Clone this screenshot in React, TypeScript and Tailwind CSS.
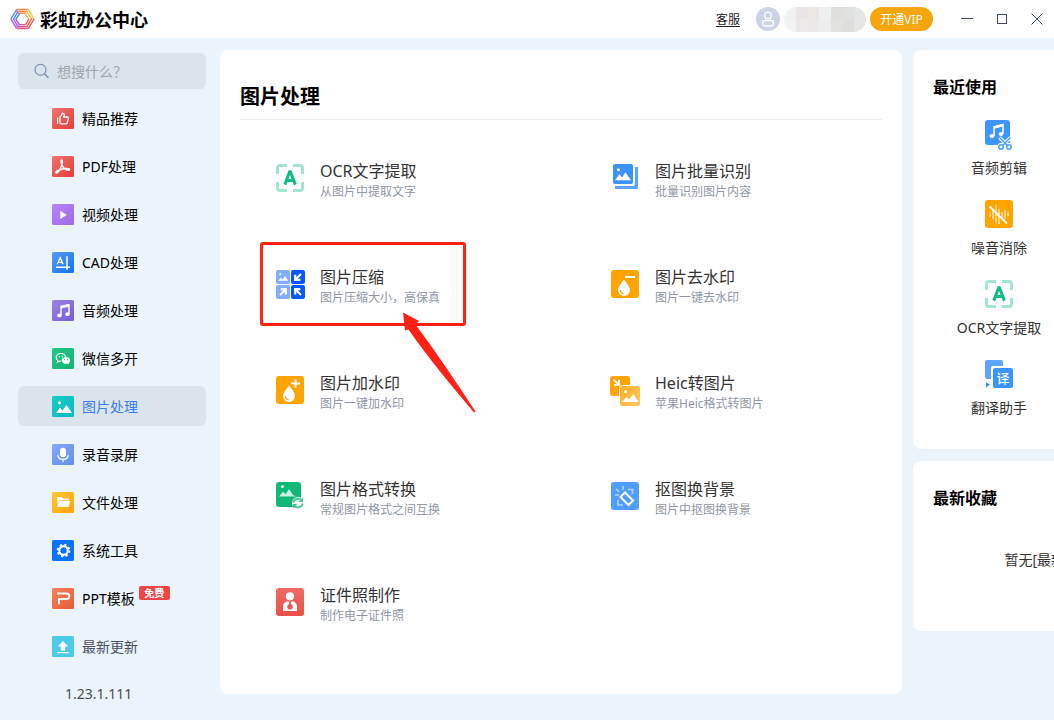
import type { ReactNode } from "react";

/* ---------- sidebar icons: 22 x 21 tiles ---------- */

function Tile({ id, from, to, children }: { id: string; from: string; to: string; children: ReactNode }) {
  return (
    <svg width="22" height="21" viewBox="0 0 22 21" fill="none" className="shrink-0" aria-hidden="true">
      <defs>
        <linearGradient id={id} x1="0" y1="0" x2="1" y2="1">
          <stop offset="0" stopColor={from} />
          <stop offset="1" stopColor={to} />
        </linearGradient>
      </defs>
      <rect width="22" height="21" rx="1.5" fill={`url(#${id})`} />
      {children}
    </svg>
  );
}

const ThumbIcon = () => (
  <Tile id="t-thumb" from="#ee7472" to="#e63b38">
    <path d="M5.6 9.6v6.2M8 9.4l2.6-4.2c1.4 0 1.9 1 1.6 2.1l-.4 1.7h3.4c.9 0 1.3.7 1.1 1.5l-1 4.1c-.2.8-.7 1.2-1.5 1.2H9.2c-.8 0-1.2-.4-1.2-1.2z" stroke="#fff" strokeWidth="1.3" strokeLinejoin="round" />
  </Tile>
);
const PdfIcon = () => (
  <Tile id="t-pdf" from="#ee7472" to="#e63b38">
    <path d="M4.3 17.2c1.8-.7 4.1-4.3 5.3-7.7.7-2.1 1.2-5 .3-5.4-1.1-.4-1.2 1.9-.4 3.9 1.2 3.2 3.8 5.9 6.7 6.3 1.6.2 1.8-1.2.3-1.5-3.2-.6-7.6.4-10.5 1.7-1.9.9-3 2.2-1.7 2.7z" stroke="#fff" strokeWidth="1.4" strokeLinejoin="round" />
  </Tile>
);
const VideoIcon = () => (
  <Tile id="t-video" from="#b884fb" to="#9a6be8">
    <path d="M8.3 6.7v8.4L14.8 11z" fill="#fff" />
  </Tile>
);
const CadIcon = () => (
  <Tile id="t-cad" from="#5b9bf6" to="#1172ee">
    <path d="M5.3 12.3 8.2 5.6l2.9 6.7M6.3 10.3h3.9" stroke="#fff" strokeWidth="1.3" />
    <path d="M4 15.2h14M15 4.2v13.6" stroke="#fff" strokeWidth="1.5" />
  </Tile>
);
const MusicIcon = () => (
  <Tile id="t-music" from="#9b84e4" to="#775bdb">
    <path d="M9 15.2V6.2l8-1.7v9.5" stroke="#fff" strokeWidth="1.4" />
    <path d="M9 6l8-1.7v2.4L9 8.4z" fill="#fff" />
    <ellipse cx="7.4" cy="15.5" rx="2.2" ry="1.9" fill="#fff" />
    <ellipse cx="15.4" cy="14.2" rx="2.2" ry="1.9" fill="#fff" />
  </Tile>
);
const WechatIcon = () => (
  <Tile id="t-wechat" from="#22c987" to="#12b372">
    <path d="M8.9 5.5c-2.8 0-4.7 1.8-4.7 4 0 1.3.6 2.3 1.6 3l-.3 1.5 1.7-.9 1.7.3" stroke="#fff" strokeWidth="1.2" />
    <path d="M8.9 5.5c2.4 0 4.2 1.3 4.6 3" stroke="#fff" strokeWidth="1.2" />
    <path d="M14 8.9c2.3 0 4.2 1.5 4.2 3.5 0 1.1-.6 2-1.4 2.6l.3 1.4-1.6-.8-1.5.2c-2.3 0-4.2-1.5-4.2-3.4 0-2 1.9-3.5 4.2-3.5z" fill="#fff" />
    <g fill="#16b978"><circle cx="12.5" cy="11.6" r=".7" /><circle cx="15.5" cy="11.6" r=".7" /></g>
    <g fill="#fff"><circle cx="7.4" cy="8.7" r=".7" /><circle cx="10.3" cy="8.7" r=".7" /></g>
  </Tile>
);
const PictureIcon = () => (
  <Tile id="t-pic" from="#19ccc4" to="#0cb9c4">
    <circle cx="7.5" cy="6.7" r="1.5" fill="#fff" />
    <path d="M4 17l4-5.4 2.4 2.8L14.6 9l5.4 8z" fill="#fff" />
  </Tile>
);
const MicIcon = () => (
  <Tile id="t-mic" from="#84a8fb" to="#658fe8">
    <rect x="8" y="3.8" width="6" height="9.4" rx="3" fill="#fff" />
    <path d="M5.8 10.8c0 2.7 2.1 4.6 5.2 4.6s5.2-1.9 5.2-4.6M11 15.4v2.8" stroke="#fff" strokeWidth="1.2" />
  </Tile>
);
const FolderIcon = () => (
  <Tile id="t-folder" from="#fec735" to="#fea408">
    <path d="M5 6c0-.6.4-1 1-1h3.5l1.5 1.6h5c.5 0 .8.3.8.8v.8H8L5.6 12z" fill="#fff" />
    <path d="M7.7 8.9h10.5l-1.4 5.5c-.1.5-.4.7-.9.7H5.8c-.5 0-.8-.4-.7-.9z" fill="#fff" />
  </Tile>
);
const GearIcon = () => (
  <Tile id="t-gear" from="#0a72ff" to="#0a72ff">
    <circle cx="11.5" cy="10.5" r="4.3" stroke="#fff" strokeWidth="2.2" />
    <circle cx="11.5" cy="10.5" r="5.9" stroke="#fff" strokeWidth="1.8" strokeDasharray="2.3 2.333" />
  </Tile>
);
const PptIcon = () => (
  <Tile id="t-ppt" from="#f3805f" to="#e65e33">
    <path d="M5.4 5.5h9.2a2.7 2.7 0 0 1 0 5.5H6.9v5.2" stroke="#fff" strokeWidth="1.9" />
  </Tile>
);
const UpdateIcon = () => (
  <Tile id="t-update" from="#4bcaea" to="#4bcaea">
    <path d="M11 5l5.2 5.4h-3.1v4.2H8.9v-4.2H5.8z" fill="#fff" />
    <path d="M5 16.6h12.2" stroke="#fff" strokeWidth="1.2" />
  </Tile>
);

/* ---------- feature icons: 28 x 28 canvas ---------- */

function Glyph({ children }: { children: ReactNode }) {
  return (
    <svg width="28" height="28" viewBox="0 0 28 28" fill="none" className="shrink-0 overflow-visible" aria-hidden="true">
      {children}
    </svg>
  );
}

const OcrIcon = () => (
  <Glyph>
    <path d="M1.5 10V4A2.5 2.5 0 0 1 4 1.5h7M17 1.5h7A2.5 2.5 0 0 1 26.5 4v6M26.5 18v6a2.5 2.5 0 0 1-2.5 2.5h-7M11 26.5H4A2.5 2.5 0 0 1 1.5 24v-6" stroke="#a3e6cd" strokeWidth="3" />
    <path d="M8.8 20.6 14 6.8 19.4 20.6M10.8 16.4h6.5" stroke="#0cbd7d" strokeWidth="3" strokeLinejoin="bevel" />
  </Glyph>
);
const BatchIcon = () => (
  <Glyph>
    <rect x="2" y="0" width="20" height="20" rx="2" fill="#3d92fa" />
    <circle cx="7.4" cy="5.8" r="1.5" fill="#fff" />
    <path d="M4 16.2l4.4-6 2.7 3.3 3.3-5.3 5.6 8z" fill="#fff" />
    <path d="M24 3h3v20.5A1.5 1.5 0 0 1 25.5 25H4v-3h18a2 2 0 0 0 2-2z" fill="#5ea3fb" />
  </Glyph>
);
const CompressIcon = () => (
  <Glyph>
    <rect y="0" width="14" height="14" rx="2" fill="#84adff" />
    <rect x="15" y="0" width="14" height="14" rx="2" fill="#0458ff" />
    <rect y="15" width="14" height="14" rx="2" fill="#84adff" />
    <rect x="15" y="15" width="14" height="14" rx="2" fill="#0458ff" />
    <circle cx="4.3" cy="4.3" r="1" fill="#fff" />
    <path d="M2.2 10.8l2.7-3 1.8 1.6L9 6l3.2 4.8z" fill="#fff" />
    <path d="M25 4l-5.5 5.5M19.2 4.7v5.2h5.2" stroke="#fff" strokeWidth="2.2" />
    <path d="M4 25l5.5-5.5M4.6 19.2h5.2v5.2" stroke="#fff" strokeWidth="2.2" />
    <path d="M25 25l-5.5-5.5M24.4 19.2h-5.2v5.2" stroke="#fff" strokeWidth="2.2" />
  </Glyph>
);
const Drop = () => (
  <>
    <path d="M13 9.5c2.8 4 6 7.2 6 10.4a6 6 0 0 1-12 0c0-3.2 3.2-6.4 6-10.4z" fill="#fff" />
    <path d="M9.3 20.3a3.8 3.8 0 0 0 2.8 3.3" stroke="#ffa400" strokeWidth="1.2" strokeLinecap="round" />
  </>
);
const RemoveMarkIcon = () => (
  <Glyph>
    <rect width="28" height="28" rx="3" fill="#ffa400" />
    <Drop />
    <path d="M14 7h10" stroke="#fff" strokeWidth="2" />
  </Glyph>
);
const AddMarkIcon = () => (
  <Glyph>
    <rect width="28" height="28" rx="3" fill="#ffa400" />
    <Drop />
    <path d="M15 7.5h9M19.5 3v9" stroke="#fff" strokeWidth="1.9" />
  </Glyph>
);
const HeicIcon = () => (
  <Glyph>
    <defs>
      <linearGradient id="g-heic" x1="0" y1="0" x2="1" y2="1">
        <stop offset="0" stopColor="#ffae1d" />
        <stop offset="1" stopColor="#ffc965" />
      </linearGradient>
    </defs>
    <rect x="-1" y="0" width="20" height="20" rx="3" fill="#ffa400" />
    <path d="M2.5 3.5l5 4.8M8 3.8v5H3" stroke="#fff" strokeWidth="1.8" />
    <rect x="8.5" y="9.5" width="21" height="21" rx="3" fill="url(#g-heic)" stroke="#fff" />
    <circle cx="14.5" cy="15.5" r="1.5" fill="#fff" />
    <path d="M11 26l4.5-5 2.8 2.5 4-5.5 5.2 8z" fill="#fff" />
  </Glyph>
);
const ConvertIcon = () => (
  <Glyph>
    <rect width="25" height="25" rx="3" fill="#10b877" />
    <circle cx="6.5" cy="4.7" r="1.4" fill="#fff" />
    <path d="M3 14.5l4-4.7 2.7 2.5L13 7l4 6 3 1.5z" fill="#c9f0e0" />
    <circle cx="22" cy="21" r="6" fill="#fff" />
    <path d="M17.3 20.5a5 5 0 0 1 8.5-2.3M26.7 21.5a5 5 0 0 1-8.5 2.3" stroke="#3fc993" strokeWidth="1.8" />
    <path d="M27 15.7v4.2h-4.3zM17 26.3v-4.2h4.3z" fill="#3fc993" />
  </Glyph>
);
const CutoutIcon = () => (
  <Glyph>
    <rect width="28" height="28" rx="3" fill="#4f9dfd" />
    <path d="M14 10.5l8 8-4.5 4.5-8-8z" stroke="#fff" strokeWidth="2" />
    <path d="M17 7.5h4.5v4.5M7 18v5h5M12 4v4M5 7l3.3 3M4 13h4" stroke="#b0d4ff" strokeWidth="1.7" />
  </Glyph>
);
const IdPhotoIcon = () => (
  <Glyph>
    <defs>
      <linearGradient id="g-id" x1="0" y1="0" x2="0" y2="1">
        <stop offset="0" stopColor="#ee6c65" />
        <stop offset="1" stopColor="#ea4f47" />
      </linearGradient>
    </defs>
    <rect width="28" height="28" rx="3" fill="url(#g-id)" />
    <circle cx="14" cy="8.3" r="4.1" fill="#fff" />
    <path d="M7 23v-4.5c0-3 2-5 5-5h4c3 0 5 2 5 5V23z" fill="#fff" />
    <path d="M12.5 13.5h3l-.8 2.5h-1.4z" fill="#ea5850" />
    <circle cx="14" cy="18.7" r="2.8" fill="#ea5850" />
  </Glyph>
);
const AudioCutIcon = () => (
  <Glyph>
    <rect width="25" height="25" rx="3" fill="#3e96fa" />
    <path d="M9 16V6.8l9-2.3V14" stroke="#fff" strokeWidth="1.5" />
    <path d="M9 6.3l9-2.3v2.5L9 8.8z" fill="#fff" />
    <ellipse cx="7" cy="16" rx="2.5" ry="2.1" fill="#fff" />
    <ellipse cx="16" cy="14" rx="2.2" ry="1.9" fill="#fff" />
    <g stroke="#fff" strokeWidth="3.5">
      <circle cx="16" cy="27" r="2.2" /><circle cx="24" cy="27" r="2.2" /><path d="M14.5 17.5l8 8M25.5 17.5l-8 8" />
    </g>
    <g stroke="#4ea0fb" strokeWidth="1.5">
      <circle cx="16" cy="27" r="2.2" fill="#fff" /><circle cx="24" cy="27" r="2.2" fill="#fff" /><path d="M14.5 17.5l8 8M25.5 17.5l-8 8" />
    </g>
  </Glyph>
);
const NoiseIcon = () => (
  <Glyph>
    <rect width="28" height="28" rx="3" fill="#ffa400" />
    <path d="M5 12v5M8 9.5v10M11 4.5v20M14 9v15M17 12v7M20 10v9M23 12.5v4" stroke="#ffe0a3" strokeWidth="1.5" />
    <path d="M4.5 6.5 22 23.5" stroke="#fff" strokeWidth="1.8" />
  </Glyph>
);
const TranslateIcon = () => (
  <span className="grid h-7 w-7 shrink-0">
    <span className="col-start-1 row-start-1">
      <Glyph>
        <path d="M2 0h14a2 2 0 0 1 2 2v4H8a2 2 0 0 0-2 2v11H2a2 2 0 0 1-2-2V2a2 2 0 0 1 2-2z" fill="#5ea4fc" />
        <rect x="8" y="8" width="20" height="20" rx="2" fill="#3a94fb" />
        <path d="M1 22v5.5L5 24.7z" fill="#3a94fb" />
      </Glyph>
    </span>
    <span className="col-start-1 row-start-1 flex items-end justify-end">
      <span className="h-5 w-5 text-center text-[13px] font-medium leading-5 text-white">译</span>
    </span>
  </span>
);

function Logo() {
  const sides = ["#f58a4c", "#f9c24e", "#f0604f", "#e05a8a", "#a463e6", "#5c8ef0"];
  const paths = [
    "M7 1h12M6.3 3h12M7 5h10",
    "M19 1l6 10M17 2.5l5.5 8.5M15.5 5l4 6.5",
    "M25 11l-6 10M22.5 10.5l-5 9M19.5 11l-3 6",
    "M19 21H7M18.5 19H7M16 17H9",
    "M7 21L1 11M8.5 19.5L3.5 11M10 17.5L6 11",
    "M1 11L7 1M3.5 11.5l5-8.5M6 11.5L10 5.5",
  ];
  return (
    <svg width="25" height="22" viewBox="0 0 26 22" fill="none" className="shrink-0" aria-hidden="true">
      {paths.map((d, i) => (
        <path key={d} d={d} stroke={sides[i]} strokeWidth="1.5" />
      ))}
    </svg>
  );
}

/* ---------- data ---------- */

type NavItem = { label: string; Icon: () => ReactNode; active?: boolean; badge?: string; muted?: boolean };

const NAV: NavItem[] = [
  { label: "精品推荐", Icon: ThumbIcon },
  { label: "PDF处理", Icon: PdfIcon },
  { label: "视频处理", Icon: VideoIcon },
  { label: "CAD处理", Icon: CadIcon },
  { label: "音频处理", Icon: MusicIcon },
  { label: "微信多开", Icon: WechatIcon },
  { label: "图片处理", Icon: PictureIcon, active: true },
  { label: "录音录屏", Icon: MicIcon },
  { label: "文件处理", Icon: FolderIcon },
  { label: "系统工具", Icon: GearIcon },
  { label: "PPT模板", Icon: PptIcon, badge: "免费" },
  { label: "最新更新", Icon: UpdateIcon, muted: true },
];

type Feature = { title: string; desc: string; Icon: () => ReactNode; marked?: boolean };

const FEATURES: Feature[] = [
  { title: "OCR文字提取", desc: "从图片中提取文字", Icon: OcrIcon },
  { title: "图片批量识别", desc: "批量识别图片内容", Icon: BatchIcon },
  { title: "图片压缩", desc: "图片压缩大小，高保真", Icon: CompressIcon, marked: true },
  { title: "图片去水印", desc: "图片一键去水印", Icon: RemoveMarkIcon },
  { title: "图片加水印", desc: "图片一键加水印", Icon: AddMarkIcon },
  { title: "Heic转图片", desc: "苹果Heic格式转图片", Icon: HeicIcon },
  { title: "图片格式转换", desc: "常规图片格式之间互换", Icon: ConvertIcon },
  { title: "抠图换背景", desc: "图片中抠图换背景", Icon: CutoutIcon },
  { title: "证件照制作", desc: "制作电子证件照", Icon: IdPhotoIcon },
];

const RECENT = [
  { label: "音频剪辑", Icon: AudioCutIcon },
  { label: "噪音消除", Icon: NoiseIcon },
  { label: "OCR文字提取", Icon: OcrIcon },
  { label: "翻译助手", Icon: TranslateIcon },
];

const MOSAIC = [
  "bg-[#eff1f2]", "bg-[#e9e4e5]", "bg-[#ece7e4]", "bg-[#f0f0f0]", "bg-[#dfdfdb]", "bg-[#e0e2df]", "bg-[#e4e5e6]",
  "bg-[#f2f3f3]", "bg-[#ece9ea]", "bg-[#ebe8e8]", "bg-[#eeeeee]", "bg-[#e2e2de]", "bg-[#dedfdc]", "bg-[#e6e6e4]",
];

/* ---------- sections ---------- */

function TitleBar() {
  return (
    <header className="flex h-[38px] items-center bg-white pl-[10px]">
      <Logo />
      <h1 className="ml-[5px] flex-1 pt-0.5 text-[18px] font-bold leading-6 text-black">彩虹办公中心</h1>
      <a href="#support" className="pt-0.5 text-xs leading-4 text-[#222] underline underline-offset-2">客服</a>
      <button type="button" aria-label="账号" className="ml-4 h-6 w-6 rounded-full">
        <svg width="24" height="24" viewBox="0 0 24 24" fill="none" aria-hidden="true">
          <circle cx="12" cy="12" r="12" fill="#ccd3e4" />
          <circle cx="12" cy="8.5" r="3.3" stroke="#fff" strokeWidth="1.3" />
          <rect x="6.5" y="13.5" width="11" height="5.5" rx="2.7" stroke="#fff" strokeWidth="1.3" />
        </svg>
      </button>
      <div className="ml-1 grid h-[25px] w-[82px] grid-cols-7 overflow-hidden rounded-full">
        {MOSAIC.map((tone, i) => (
          <span key={i} className={tone} />
        ))}
      </div>
      <button type="button" className="ml-1 h-6 w-[63px] rounded-full bg-[#f4a60c] pt-px text-xs leading-5 text-white">开通VIP</button>
      <div className="ml-4 flex text-[#3f4a63]">
        <button type="button" aria-label="最小化" className="flex h-8 w-[35px] items-center justify-center">
          <svg width="12" height="12" viewBox="0 0 12 12" stroke="currentColor" aria-hidden="true"><path d="M0 5.5h12" /></svg>
        </button>
        <button type="button" aria-label="最大化" className="flex h-8 w-[35px] items-center justify-center">
          <svg width="12" height="12" viewBox="0 0 12 12" fill="none" stroke="currentColor" aria-hidden="true"><rect x="1.5" y="1.5" width="9" height="9" /></svg>
        </button>
        <button type="button" aria-label="关闭" className="flex h-8 w-[35px] items-center justify-center">
          <svg width="12" height="12" viewBox="0 0 12 12" stroke="currentColor" aria-hidden="true"><path d="M.5.5l11 11M11.5.5l-11 11" /></svg>
        </button>
      </div>
    </header>
  );
}

function Sidebar() {
  return (
    <aside className="w-[220px] shrink-0 pb-4 pl-[18px] pr-[14px] pt-[15px]">
      <label className="flex h-9 items-center gap-2 rounded-md bg-[#dae4ec] pl-4 pr-3">
        <svg width="15" height="16" viewBox="0 0 15 16" fill="none" stroke="#8290ae" strokeWidth="1.2" aria-hidden="true">
          <circle cx="6.5" cy="6.8" r="5.5" />
          <path d="M10.5 10.8l4 4" strokeWidth="1.6" />
        </svg>
        <input
          type="search"
          aria-label="搜索"
          placeholder="想搜什么？"
          className="min-w-0 flex-1 bg-transparent pt-0.5 text-sm leading-5 outline-none placeholder:text-[#a1a5a9]"
        />
      </label>
      <nav className="mt-[9px] flex flex-col gap-2">
        {NAV.map(({ label, Icon, active, badge, muted }) => (
          <button
            key={label}
            type="button"
            className={
              active
                ? "flex h-10 items-center rounded-md bg-[#dae4ec] pl-[34px] text-sm text-[#3b7cf5]"
                : muted
                  ? "flex h-10 items-center rounded-md pl-[34px] text-sm text-[#4a5064]"
                  : "flex h-10 items-center rounded-md pl-[34px] text-sm text-black"
            }
          >
            <Icon />
            <span className="ml-2 pt-0.5">{label}</span>
            {badge && (
              <span className="ml-1 mt-2 h-[14px] w-[31px] self-start rounded-xs bg-[#f14445] text-center text-[10px] font-bold leading-[14px] text-white">
                {badge}
              </span>
            )}
          </button>
        ))}
      </nav>
      <p className="mt-[18px] pl-[47px] text-sm leading-5 text-[#4d4d4d]">1.23.1.111</p>
    </aside>
  );
}

function FeatureCard({ title, desc, Icon, marked }: Feature) {
  return (
    <li className="relative">
      <button type="button" className="flex h-[84px] w-full items-center gap-4 text-left">
        <Icon />
        <span className="flex flex-col pt-1.5">
          <span className="text-base leading-[22px] text-[#333]">{title}</span>
          <span className="text-xs leading-5 text-[#9197a6]">{desc}</span>
        </span>
      </button>
      {marked && (
        <>
          <span className="pointer-events-none absolute -left-4 top-0 h-[84px] w-[206px] rounded-[3px] border-3 border-[#ff2116]" />
          <svg width="76" height="104" viewBox="0 0 76 104" className="pointer-events-none absolute left-[126px] top-[70px]" aria-hidden="true">
            <path d="M1 0.5 17 9 13.5 12.5C35 41 54 70 73.5 99.5L72 100.5C49 73 27 47 6.5 17.5L3 18.5z" fill="#ff2116" />
          </svg>
        </>
      )}
    </li>
  );
}

export default function App() {
  return (
    <div className="flex min-h-screen flex-col bg-[#ebf3fb] font-['Noto_Sans','Noto_Sans_CJK_SC',sans-serif]">
      <TitleBar />
      <div className="flex flex-1 items-start">
        <Sidebar />
        <main className="mt-3 min-w-0 flex-1 rounded-lg bg-white pb-[50px]">
          <h2 className="mx-5 border-b border-[#f0f0f0] pb-2 pt-[33px] text-xl leading-7 font-bold text-black">图片处理</h2>
          <ul className="mt-4 grid grid-cols-2 gap-x-11 gap-y-[22px] pl-14">
            {FEATURES.map((f) => (
              <FeatureCard key={f.title} {...f} />
            ))}
          </ul>
        </main>
        <aside className="ml-[11px] mt-3 w-[141px] shrink-0 overflow-hidden">
          <div className="flex w-[276px] flex-col gap-3">
            <section className="rounded-lg bg-white pb-[31px] pl-5 pt-[25px]">
              <h3 className="text-base leading-6 font-bold text-black">最近使用</h3>
              <ul className="mt-[21px] flex w-[132px] flex-col gap-[22px]">
                {RECENT.map(({ label, Icon }) => (
                  <li key={label}>
                    <button type="button" className="flex w-full flex-col items-center gap-[10px] text-sm leading-5 text-[#333]">
                      <Icon />
                      <span>{label}</span>
                    </button>
                  </li>
                ))}
              </ul>
            </section>
            <section className="rounded-lg bg-white pb-[61px] pt-[25px]">
              <h3 className="pl-5 text-base leading-6 font-bold text-black">最新收藏</h3>
              <p className="mt-10 text-center text-sm leading-5 text-[#333]">暂无[最新收藏]</p>
            </section>
          </div>
        </aside>
      </div>
    </div>
  );
}
